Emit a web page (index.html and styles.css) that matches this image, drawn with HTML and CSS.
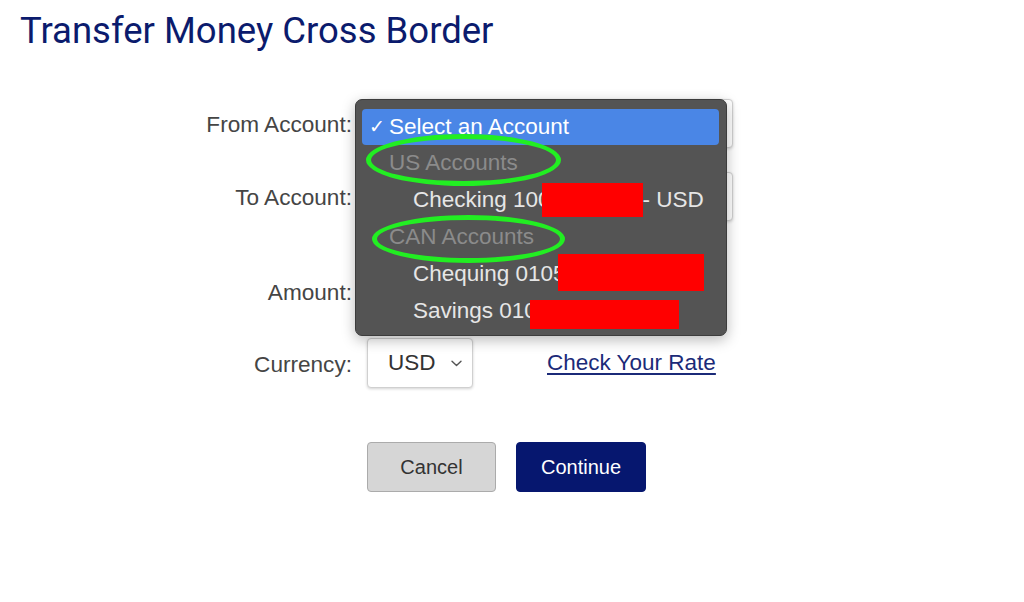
FILE: index.html
```html
<!DOCTYPE html>
<html lang="en">
<head>
<meta charset="utf-8">
<title>Transfer Money Cross Border</title>
<link rel="stylesheet" href="styles.css">
</head>
<body>
<h1 class="title">Transfer Money Cross Border</h1>
<form class="form">
  <label class="label row-from">From Account:</label>
  <div class="field row-from"><div class="select select-wide"></div></div>

  <label class="label row-to">To Account:</label>
  <div class="field row-to"><div class="select select-wide"></div></div>

  <label class="label row-amount">Amount:</label>
  <div class="field row-amount"><div class="input"></div></div>

  <label class="label row-currency">Currency:</label>
  <div class="field row-currency currency-field">
    <div class="select select-small">
      <span class="select-value">USD</span>
      <svg class="chev" width="11" height="7" viewBox="0 0 11 7"><path d="M1 1.2 L5.5 5.6 L10 1.2" fill="none" stroke="#555" stroke-width="1.4" stroke-linecap="round" stroke-linejoin="round"/></svg>
    </div>
    <a class="rate-link" href="#">Check Your Rate</a>
  </div>

  <div class="field row-buttons buttons">
    <button type="button" class="btn btn-cancel">Cancel</button>
    <button type="button" class="btn btn-continue">Continue</button>
  </div>
</form>

<div class="menu">
  <ul class="menu-list">
    <li class="opt selected"><span class="check">✓</span>Select an Account</li>
    <li class="group">US Accounts</li>
    <li class="opt sub">Checking 100<span class="redact r-checking"></span>- USD</li>
    <li class="group">CAN Accounts</li>
    <li class="opt sub">Chequing 0105<span class="redact r-chequing"></span></li>
    <li class="opt sub">Savings 010<span class="redact r-savings"></span></li>
  </ul>
  <span class="ring ring-us"></span>
  <span class="ring ring-can"></span>
</div>
</body>
</html>
```
FILE: styles.css
```css
html, body {
  margin: 0;
  padding: 0;
  background: #ffffff;
}

body {
  width: 1024px;
  height: 602px;
  position: relative;
  overflow: hidden;
  font-family: "Liberation Sans", Arial, sans-serif;
}

.title {
  margin: 0;
  padding: 10px 0 0 20px;
  font-family: Roboto, "Liberation Sans", sans-serif;
  font-weight: 400;
  font-size: 36.5px;
  line-height: 42px;
  color: #0b1b6d;
}

.form {
  display: grid;
  grid-template-columns: 352px auto;
  column-gap: 15px;
  margin-top: 47px;
}

.label {
  justify-self: end;
  align-self: center;
  padding-top: 3px;
  font-size: 22.6px;
  color: #454545;
}

.field {
  display: flex;
  align-items: center;
}

.row-from { grid-row: 1; }
.row-to { grid-row: 2; margin-top: 24px; }
.row-amount { grid-row: 3; margin-top: 45px; }
.row-currency { grid-row: 4; margin-top: 22px; }
.row-buttons { grid-row: 5; grid-column: 2; margin-top: 54px; }

.label.row-from, .label.row-to, .label.row-amount, .label.row-currency { grid-column: 1; }
.field.row-from, .field.row-to, .field.row-amount, .field.row-currency { grid-column: 2; }

.select {
  box-sizing: border-box;
  height: 49px;
  background: #fff;
  border: 1px solid #d0d0d0;
  border-radius: 4px;
  box-shadow: 0 1px 3px rgba(0,0,0,0.18);
}

.select-wide { width: 366px; }

.input {
  box-sizing: border-box;
  width: 260px;
  height: 50px;
  border: 1px solid #d0d0d0;
  border-radius: 4px;
}

.select-small {
  width: 106px;
  height: 50px;
  display: flex;
  align-items: center;
  padding: 0 10px 0 20px;
}

.select-value {
  flex: 1;
  font-size: 22.5px;
  color: #333;
}

.chev { display: block; }

.rate-link {
  margin-left: 74px;
  font-size: 22.5px;
  color: #1b2a78;
  text-decoration: underline;
  text-underline-offset: 3px;
}

.buttons { gap: 20px; }

.btn {
  box-sizing: border-box;
  height: 50px;
  border-radius: 4px;
  font-family: "Liberation Sans", Arial, sans-serif;
  font-size: 20px;
  padding: 0;
}

.btn-cancel {
  width: 129px;
  background: #d6d6d6;
  border: 1px solid #ababab;
  color: #333;
}

.btn-continue {
  width: 130px;
  background: #06176f;
  border: 1px solid #06176f;
  color: #fff;
}

/* open dropdown menu overlay */
.menu {
  position: absolute;
  left: 355px;
  top: 99px;
  width: 372px;
  height: 237px;
  box-sizing: border-box;
  background: #545454;
  border: 1px solid #3c3c3c;
  border-radius: 7px;
  box-shadow: 0 4px 14px rgba(0,0,0,0.28);
  padding: 9px 7px 0 6px;
}

.menu-list {
  list-style: none;
  margin: 0;
  padding: 0;
}

.menu-list li {
  height: 36.8px;
  display: flex;
  align-items: center;
  font-size: 22.5px;
  white-space: nowrap;
  color: #e6e6e6;
  padding-left: 27px;
}

.menu-list .selected {
  position: relative;
  background: #4a86e6;
  border-radius: 4px;
  color: #fff;
  height: 36px;
}

.check {
  position: absolute;
  left: 7px;
  top: 6px;
  font-family: "DejaVu Sans", sans-serif;
  font-size: 19px;
}

.menu-list .group { color: #8b8b8b; }

.menu-list .sub { padding-left: 51px; }

.redact {
  display: inline-block;
  background: #ff0000;
}

.r-checking { width: 101px; height: 34px; margin-left: -9px; margin-right: 0; }
.r-chequing { width: 146px; height: 37px; margin-left: -8px; margin-top: -2px; }
.r-savings { width: 149px; height: 29px; margin-left: -7px; margin-top: 8px; }

.ring {
  position: absolute;
  box-sizing: border-box;
  border: 5px solid #22ee22;
  border-radius: 50%;
}

.ring-us { left: 10px; top: 34px; width: 195px; height: 52px; }
.ring-can { left: 16px; top: 115px; width: 193px; height: 48px; }
```
